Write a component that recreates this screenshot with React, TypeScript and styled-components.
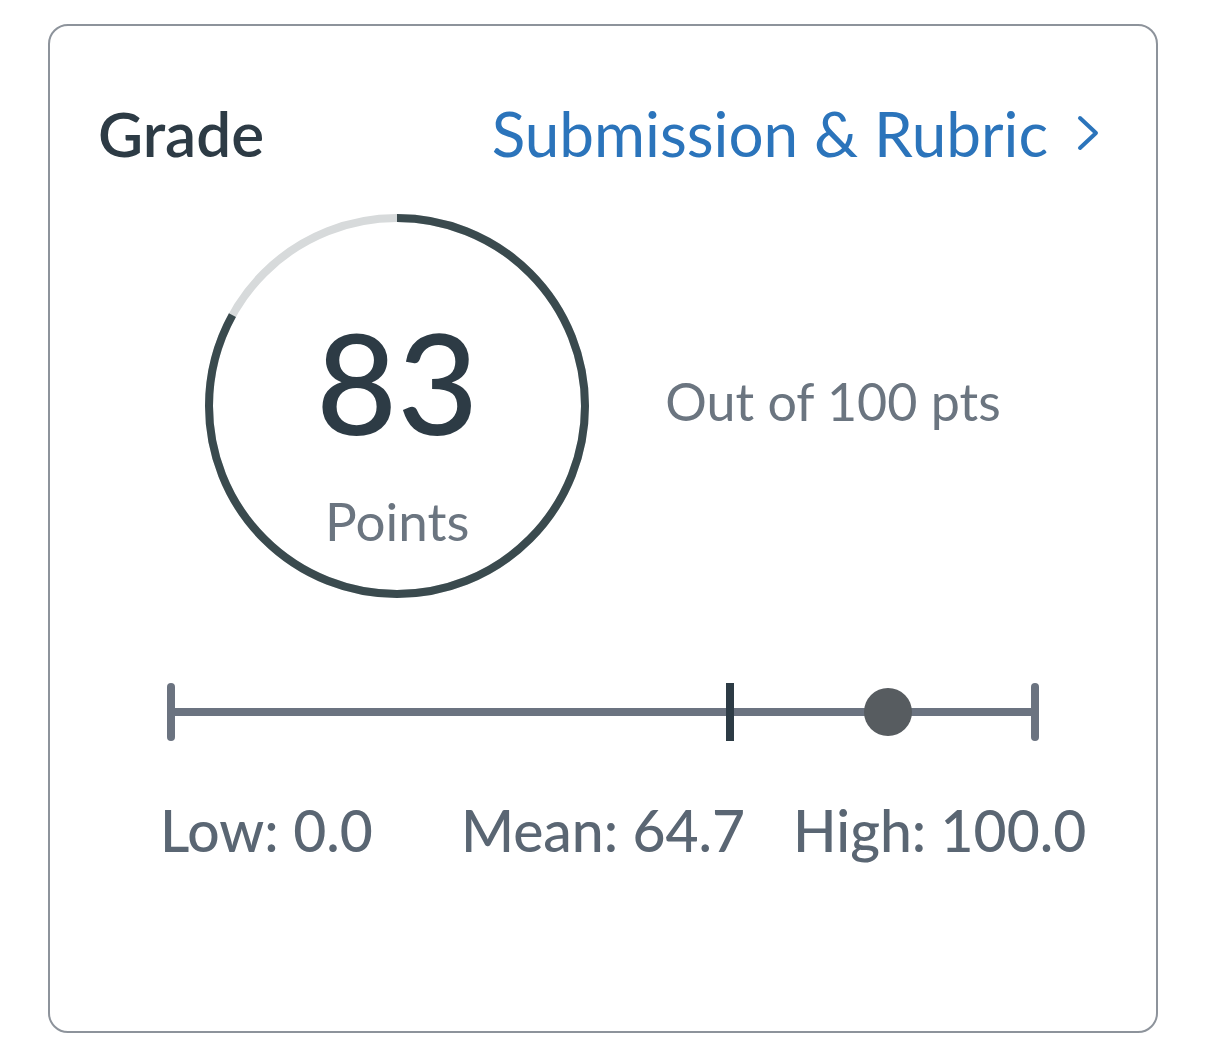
import React from 'react';
import styled, {createGlobalStyle} from "styled-components";

const GlobalStyle = createGlobalStyle`
  html, body {
    margin: 0;
    padding: 0;
    background: #ffffff;
  }
  body {
    font-family: Lato, "Liberation Sans", sans-serif;
  }
`;

const Card = styled.div`
  box-sizing: border-box;
  margin: 24px 48px 16px;
  height: 1009px;
  border: 2px solid #8d939b;
  border-radius: 20px;
  padding: 71px 48px 0;
  display: flex;
  flex-direction: column;
`;

const Header = styled.div`
  display: flex;
  flex-direction: row;
  align-items: center;
  justify-content: space-between;
`;

const Title = styled.h2`
  margin: 0;
  font-size: 62px;
  line-height: 72px;
  font-weight: 600;
  color: #2d3b45;
`;

const Link = styled.a`
  display: flex;
  align-items: center;
  gap: 28px;
  font-size: 62px;
  line-height: 72px;
  font-weight: 400;
  color: #2b74bb;
  text-decoration: none;
  padding-right: 8px;
`;

const ScoreRow = styled.div`
  margin-top: 45px;
  display: flex;
  flex-direction: row;
  align-items: center;
  justify-content: center;
  gap: 76px;
`;

const Ring = styled.div`
  position: relative;
  width: 384px;
  height: 384px;
`;

const RingLabel = styled.div`
  position: absolute;
  inset: 0;
  display: flex;
  flex-direction: column;
  align-items: center;
  padding-top: 97px;
`;

const Score = styled.div`
  font-size: 140px;
  line-height: 140px;
  font-weight: 500;
  color: #2d3b45;
`;

const ScoreUnit = styled.div`
  margin-top: 44px;
  font-size: 53px;
  line-height: 52px;
  color: #6b7580;
`;

const OutOf = styled.div`
  font-size: 52px;
  line-height: 62px;
  color: #6b7580;
  padding-bottom: 10px;
`;

const Track = styled.div`
  position: relative;
  margin: 85px 73px 0;
  height: 58px;
`;

const Line = styled.div`
  position: absolute;
  left: 0;
  right: 0;
  top: 25px;
  height: 8px;
  background: #6b7380;
`;

const Tick = styled.div<{ $dark?: boolean }>`
  position: absolute;
  top: 0;
  width: 8px;
  height: 58px;
  margin-left: -4px;
  border-radius: ${p => p.$dark ? '0' : '4px'};
  background: ${p => p.$dark ? '#2d3b45' : '#6b7380'};
`;

const Dot = styled.div`
  position: absolute;
  top: 5px;
  width: 48px;
  height: 48px;
  margin-left: -24px;
  border-radius: 50%;
  background: #575c60;
`;

const Stats = styled.div`
  margin-top: 55px;
  display: grid;
  grid-template-columns: repeat(3, 1fr);
`;

const Stat = styled.div`
  text-align: center;
  font-size: 57px;
  line-height: 68px;
  font-weight: 500;
  color: #5a6673;
  white-space: nowrap;
`;

const ChevronRight = () => (
  <svg width="24" height="36" viewBox="0 0 24 36" fill="none">
    <polyline points="4,3 20,18 4,33" stroke="#2b74bb" strokeWidth="4" strokeLinecap="round" strokeLinejoin="round"/>
  </svg>
);

const ProgressRing = ({ value }: { value: number }) => {
  const r = 188;
  const c = 2 * Math.PI * r;
  return (
    <svg width="384" height="384" viewBox="0 0 384 384">
      <circle cx="192" cy="192" r={r} fill="none" stroke="#d7dadb" strokeWidth="8"/>
      <circle
        cx="192" cy="192" r={r} fill="none" stroke="#3a4a4e" strokeWidth="8"
        strokeDasharray={`${c * value} ${c}`}
        transform="rotate(-90 192 192)"
      />
    </svg>
  );
};

const low = 0, high = 100, mean = 64.7, score = 83;
const pct = (v: number) => `${((v - low) / (high - low)) * 100}%`;

const App = () => {
  return (
    <>
      <GlobalStyle/>
      <Card>
        <Header>
          <Title>Grade</Title>
          <Link href="#">Submission &amp; Rubric <ChevronRight/></Link>
        </Header>
        <ScoreRow>
          <Ring>
            <ProgressRing value={score / 100}/>
            <RingLabel>
              <Score>{score}</Score>
              <ScoreUnit>Points</ScoreUnit>
            </RingLabel>
          </Ring>
          <OutOf>Out of 100 pts</OutOf>
        </ScoreRow>
        <Track>
          <Line/>
          <Tick style={{left: '0%'}}/>
          <Tick $dark style={{left: pct(mean)}}/>
          <Dot style={{left: pct(score)}}/>
          <Tick style={{left: '100%'}}/>
        </Track>
        <Stats>
          <Stat>Low: 0.0</Stat>
          <Stat>Mean: 64.7</Stat>
          <Stat>High: 100.0</Stat>
        </Stats>
      </Card>
    </>
  );
};

export default App;
